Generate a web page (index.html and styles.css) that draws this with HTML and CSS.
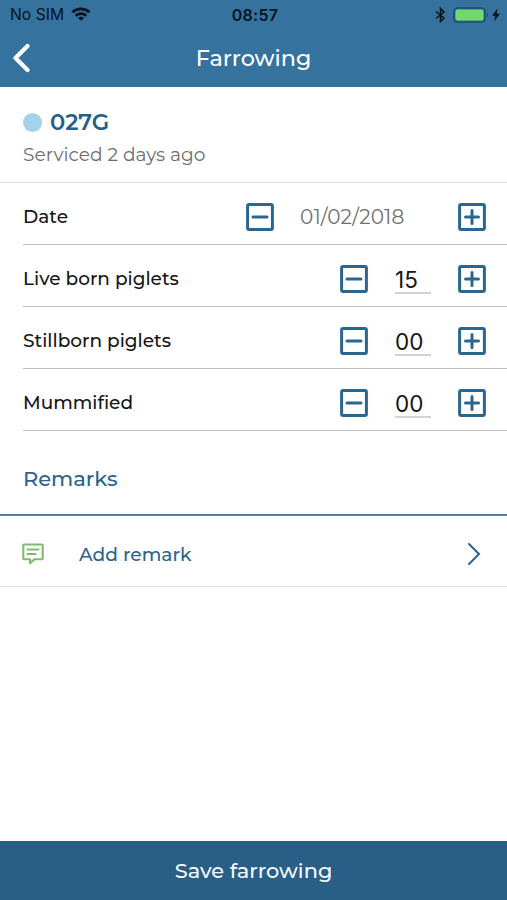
FILE: index.html
```html
<!DOCTYPE html>
<html lang="en">
<head>
<meta charset="utf-8">
<title>Farrowing</title>
<link rel="stylesheet" href="styles.css">
</head>
<body>
<svg width="0" height="0" class="defs">
  <symbol id="minus" viewBox="0 0 28 28"><rect x="1.6" y="1.6" width="24.800" height="24.800" rx="1.5"/><path d="M7 14h14"/></symbol>
  <symbol id="plus" viewBox="0 0 28 28"><rect x="1.6" y="1.6" width="24.800" height="24.800" rx="1.5"/><path d="M7.500 14h13M14 7.500v13"/></symbol>
</svg>
<div class="screen">
  <header class="top">
    <div class="status">
      <div class="carrier"><span>No SIM</span>
        <svg width="20" height="14" viewBox="0 0 20 14" fill="none" stroke="#07131c" stroke-width="2.800"><path d="M1.500 5.300C6.300 .8 13.700 .8 18.500 5.300M4.700 8.700C7.700 5.900 12.300 5.900 15.300 8.700"/><path d="M10 13.700L6.900 11C8.700 9.400 11.300 9.400 13.100 11Z" fill="#07131c" stroke="none"/></svg>
      </div>
      <span class="clock">08:57</span>
      <div class="power">
        <svg width="11" height="16" viewBox="0 0 11 16" fill="none" stroke="#07131c" stroke-width="1.5"><path d="M1 4.500L9 11L5.500 14.500V1.500L9 5L1 11.500"/></svg>
        <svg width="36" height="16" viewBox="0 0 36 16"><rect x="1" y="1" width="31" height="14" rx="3.500" fill="none" stroke="#1d4d70" stroke-width="1.600"/><rect x="2.500" y="2.500" width="28" height="11" rx="2" fill="#72d86d"/><path d="M34 5.500Q36 8 34 10.500Z" fill="#1d4d70"/></svg>
        <svg width="8" height="14" viewBox="0 0 8 14"><path d="M5.500 .5L0 7.800H3.200L2 13.500L8 5.700H4.700Z" fill="#07131c"/></svg>
      </div>
    </div>
    <div class="nav">
      <svg class="back" width="18" height="30" viewBox="0 0 18 30" fill="none" stroke="#fff" stroke-width="4.200" stroke-linecap="round" stroke-linejoin="round"><path d="M15.500 3L3.500 15L15.500 27"/></svg>
      <h1>Farrowing</h1>
    </div>
  </header>
  <section class="animal">
    <div class="name"><i class="dot"></i><h2>027G</h2></div>
    <p>Serviced 2 days ago</p>
  </section>
  <main class="rows">
    <div class="row"><label>Date</label><svg class="btn"><use href="#minus"/></svg><span class="date">01/02/2018</span><svg class="btn"><use href="#plus"/></svg></div>
    <div class="row"><label>Live born piglets</label><svg class="btn"><use href="#minus"/></svg><span class="num">15</span><svg class="btn"><use href="#plus"/></svg></div>
    <div class="row"><label>Stillborn piglets</label><svg class="btn"><use href="#minus"/></svg><span class="num">00</span><svg class="btn"><use href="#plus"/></svg></div>
    <div class="row"><label>Mummified</label><svg class="btn"><use href="#minus"/></svg><span class="num">00</span><svg class="btn"><use href="#plus"/></svg></div>
  </main>
  <h3>Remarks</h3>
  <div class="remark">
    <svg width="22" height="22" viewBox="0 0 22 22" fill="none" stroke="#7fb974" stroke-width="2.100" stroke-linejoin="round" stroke-linecap="round"><path d="M2 1.500H20Q20.700 1.500 20.700 2.200V15.500Q20.700 16.200 20 16.200H12.500L8 20.300V16.200H2Q1.300 16.200 1.300 15.500V2.200Q1.300 1.500 2 1.500ZM5.500 6.500H16.500M5.500 11H13.500"/></svg>
    <span>Add remark</span>
    <svg class="go" width="14" height="24" viewBox="0 0 14 24" fill="none" stroke="#2b638b" stroke-width="2" stroke-linecap="round"><path d="M2 2L12 12L2 22"/></svg>
  </div>
  <button class="save">Save farrowing</button>
</div>
</body>
</html>
```
FILE: styles.css
```css
* { box-sizing: border-box; }
body { margin: 0; font-family: Montserrat, Inter, sans-serif; background: #fff; color: #161616; }
h1, h2, h3, p { margin: 0; font-weight: 500; }
.defs { position: absolute; }
.screen { width: 507px; height: 900px; display: flex; flex-direction: column; overflow: hidden; white-space: nowrap; }
.top { height: 87px; background: #36729e; }
.status { height: 30px; display: grid; grid-template-columns: 1fr auto 1fr; align-items: center; padding: 0 7px 0 10px; color: #07131c; font: 400 15.700px/30px Inter, sans-serif; }
.carrier { display: flex; align-items: center; gap: 7px; }
.carrier svg { margin-top: -2px; }
.clock { font-size: 16px; font-weight: 600; letter-spacing: .3px; }
.power { display: flex; align-items: center; justify-content: flex-end; gap: 7px; }
.power svg:last-child { margin-left: -4px; }
.nav { height: 56px; display: grid; grid-template-columns: 40px 1fr 40px; align-items: center; }
.back { margin-left: 12px; }
h1 { color: #fff; font-size: 22.300px; text-align: center; }
.animal { height: 96px; border-bottom: 1px solid #ddd; padding: 20px 23px 0; }
.name { display: flex; align-items: center; gap: 8px; height: 30px; }
.dot { width: 19px; height: 19px; border-radius: 50%; background: #a4d2e8; }
h2 { font-size: 22.600px; font-weight: 600; color: #245f89; }
.animal p { margin-top: 6px; font-size: 18.600px; line-height: 24px; font-weight: 400; color: #6d6d6d; }
.row { height: 62px; margin-left: 23px; padding: 6px 21px 0 0; border-bottom: 1px solid #bdbdbd; display: flex; align-items: center; }
.row label { flex: 1; font-size: 18.500px; font-weight: 500; }
.btn { width: 28px; height: 28px; fill: none; stroke: #2b668f; stroke-width: 3; stroke-linecap: round; }
.date { width: 184px; padding-left: 26px; color: #707070; font-size: 20px; letter-spacing: .15px; }
.num { width: 36px; height: 28px; margin: 2px 27px 0; border-bottom: 2px solid #d4d4d4; font: 400 22.500px/27px Inter, sans-serif; color: #161616; }
h3 { height: 85px; border-bottom: 2px solid #4f80a2; padding: 34px 23px 0; font-size: 21px; line-height: 28px; color: #2b638b; }
.remark { height: 71px; border-bottom: 1px solid #e4e4e4; padding: 6px 26px 0 22px; display: flex; align-items: center; }
.remark span { flex: 1; margin-left: 35px; font-size: 18.600px; font-weight: 500; color: #2b638b; }
.save { margin-top: auto; height: 59px; border: 0; background: #295f87; color: #f4faff; font: 500 20.900px/59px Montserrat, Inter, sans-serif; padding: 0; }
```
